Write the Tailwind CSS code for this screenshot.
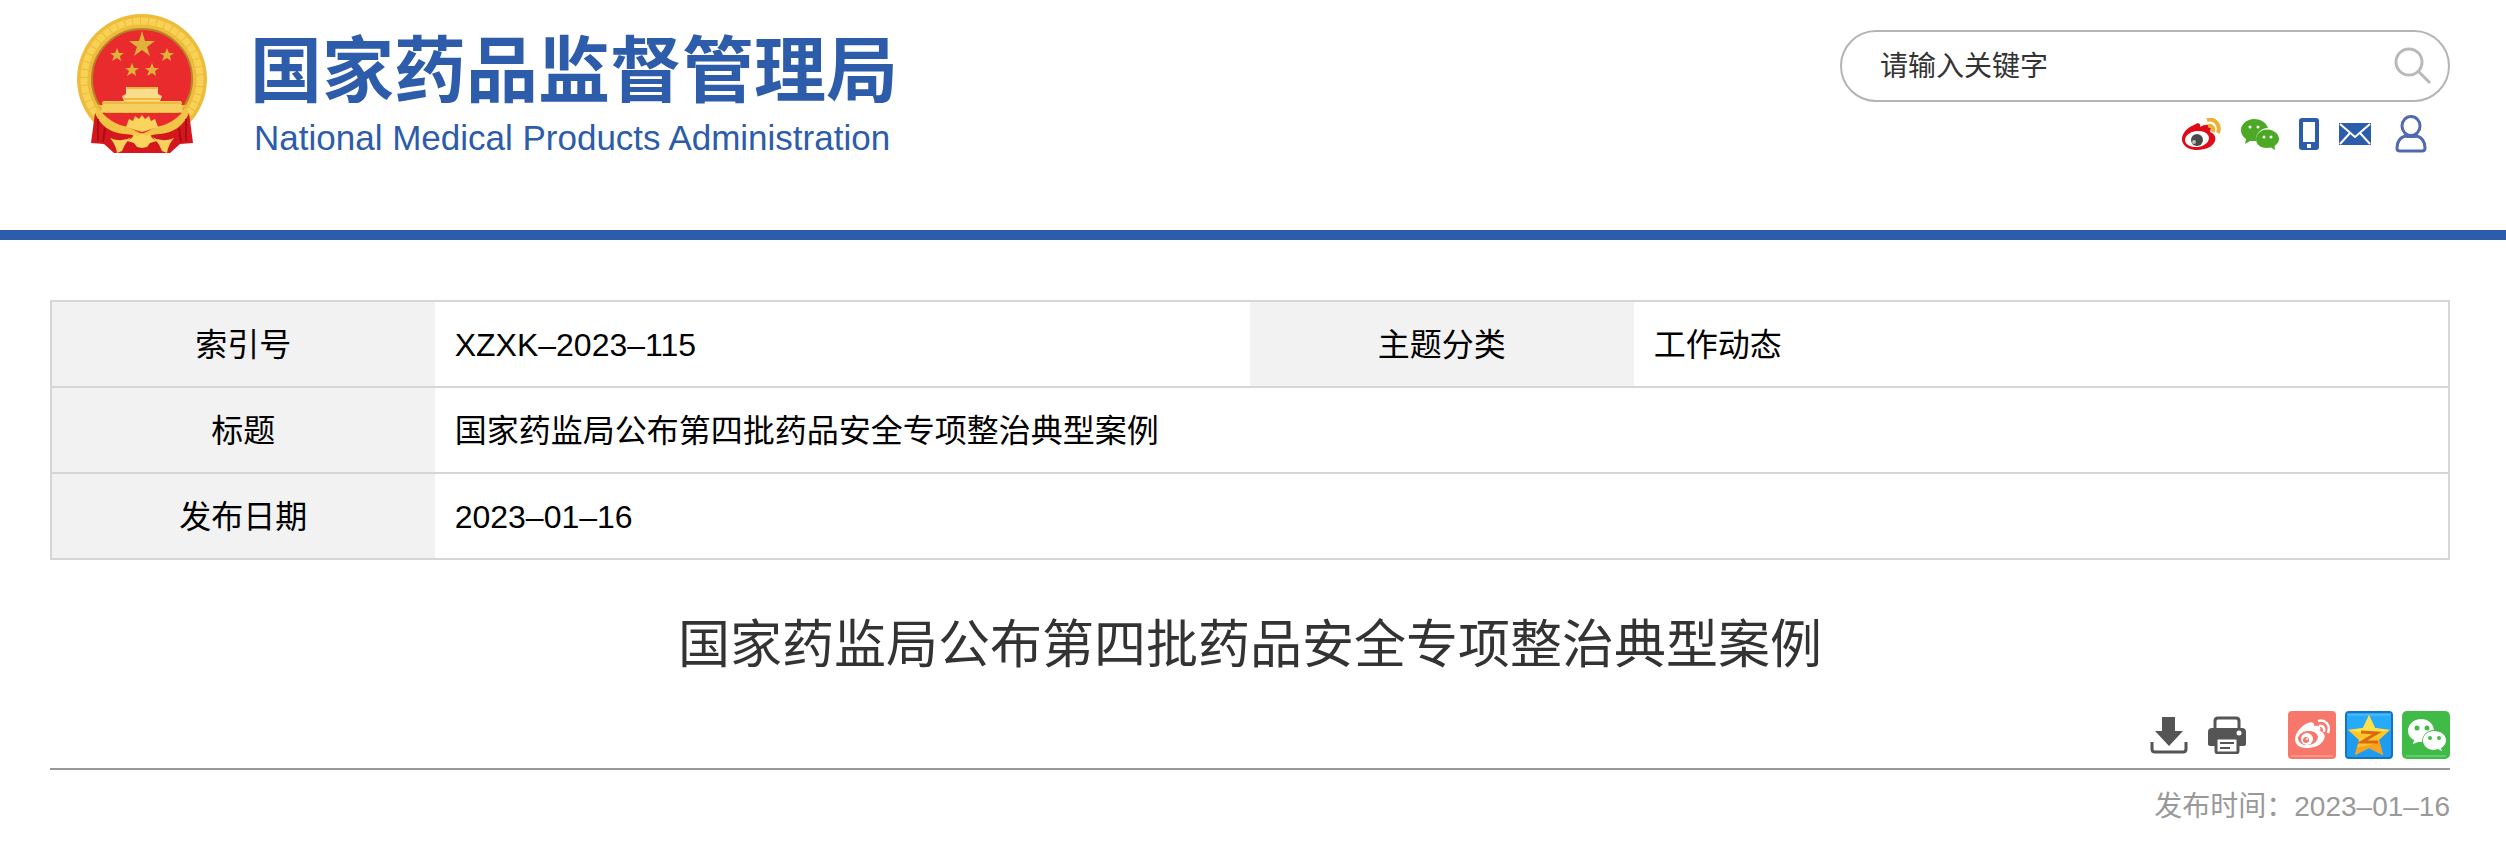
<!DOCTYPE html>
<html lang="zh-CN">
<head>
<meta charset="utf-8">
<title>国家药监局公布第四批药品安全专项整治典型案例</title>
<script src="https://cdn.jsdelivr.net/npm/@tailwindcss/browser@4"></script>
</head>
<body class="bg-white font-['Liberation_Sans','Noto_Sans_CJK_SC',sans-serif] text-black">
<header class="flex items-start justify-between border-b-10 border-[#2c5caa] pr-14 pb-[65px] pl-[76px]">
  <a href="#" class="flex items-start gap-[42px] pt-3 text-[#2c5caa]">
    <svg class="h-[143px] w-[132px]" viewBox="0 0 132 143" aria-hidden="true">
      <circle cx="66" cy="67" r="65" fill="#eebb3a"/>
      <circle cx="66" cy="67" r="58" fill="none" stroke="#f8d256" stroke-width="7" stroke-dasharray="7 1"/>
      <circle cx="66" cy="67" r="50" fill="#e92b2d" stroke="#b5832a" stroke-width="2"/>
      <path d="M19 101 L45 116 H87 L113 101 L117 131 L104 132 L94 141 H38 L28 132 L15 131Z" fill="#d5161d"/>
      <path d="M22 93 H110 L88 118 H44Z" fill="#f0c040"/>
      <path d="M24 101 H108 L98 111 L85 115 L66 122 L47 115 L34 111Z" fill="#e92b2d"/>
      <path d="M22 96 Q34 112 52 115 L66 122 L80 115 Q98 112 110 96 L113 101 Q105 120 84 122 Q72 122 66 129 Q60 122 48 122 Q27 120 19 101Z" fill="#f2c445"/>
      <path d="M50 115 L53 107 L57 109 L59 104 L63 107 L66 103 L69 107 L73 104 L75 109 L79 107 L82 115 L66 120Z" fill="#fad45c"/>
      <path d="M27 89 H50 V86 H82 V89 H105 L107 100 H25Z" fill="#f7cf60"/>
      <path d="M50 75 H82 V82 L86 84 L84 89 H48 L46 84 L50 82Z" fill="#f9dc8c"/>
      <path d="M51 76 H81 M48 87 H84 M26 91 H106" stroke="#eeb83e" stroke-width="2"/>
      <path d="M51 129 L56 126 L58 122 L62 124 L66 121 L70 124 L74 122 L76 126 L81 129 L74 131 L71 135 L66 136 L61 135 L58 131Z" fill="#fad45c"/>
      <path d="M34 126 Q46 131 56 125 Q50 129 46 139 L41 141 Q40 133 34 126Z M98 126 Q86 131 76 125 Q82 129 86 139 L91 141 Q92 133 98 126Z" fill="#f6d15c"/>
      <path d="M22 107 V129 M29 116 L27 130 M110 107 V129 M103 116 L105 130" stroke="#a80f16" stroke-width="2"/>
      <g fill="#dfb23a">
        <path d="M66 19 L69 29 L79 29 L71 35 L74 44 L66 38 L58 44 L61 35 L53 29 L63 29Z"/>
        <path d="M41 36 L43 41 L48 41 L44 44 L45 49 L41 46 L36 49 L38 44 L34 41 L39 41Z"/>
        <path d="M91 36 L93 41 L98 41 L94 44 L95 49 L91 46 L86 49 L88 44 L84 41 L89 41Z"/>
        <path d="M56 51 L58 56 L63 56 L59 59 L60 64 L56 61 L51 64 L53 59 L49 56 L54 56Z"/>
        <path d="M76 51 L78 56 L83 56 L79 59 L80 64 L76 61 L71 64 L73 59 L69 56 L74 56Z"/>
      </g>
    </svg>
    <span class="flex flex-col pt-[19px]">
      <span class="text-[72px] leading-20 font-bold">国家药品监督管理局</span>
      <span class="pl-1 text-[35px] leading-[54px]">National Medical Products Administration</span>
    </span>
  </a>
  <div class="flex w-[610px] flex-col pt-[30px]">
    <form class="flex h-18 items-center rounded-full border-2 border-[#b4b4b4] pr-4 pl-[38px]">
      <input type="text" aria-label="请输入关键字" placeholder="请输入关键字" class="min-w-0 flex-1 pt-0.5 text-[28px] leading-10 outline-none placeholder:text-[#333]">
      <button type="submit" aria-label="搜索" class="shrink-0">
        <svg class="size-[38px]" viewBox="0 0 38 38" fill="none" stroke="#b9b9b9" stroke-width="3"><circle cx="15" cy="15" r="13"/><path d="M24 24 L36 36"/></svg>
      </button>
    </form>
    <nav class="flex items-center justify-end gap-5 pt-[13px] pr-[23px]">
      <a href="#" aria-label="微博"><svg class="h-8 w-10" viewBox="0 0 40 32">
        <path d="M13 7 C17 4 20 5 19 9 C24 6 29 6 30 10 L29 14 C34 16 36 20 33 25 C29 31 21 32 14 32 C6 31 1 27 1 21 C1 15 7 9 13 7Z" fill="#e10b18"/>
        <ellipse cx="16" cy="21" rx="12" ry="8" fill="#fff" transform="rotate(-8 16 21)"/>
        <circle cx="16" cy="22" r="6" fill="#4a4a4a"/><circle cx="13" cy="24" r="2" fill="#bbb"/>
        <path d="M26 2 C34 0 40 7 37 15 M27 8 C31 7 33 10 32 14" fill="none" stroke="#eeb033" stroke-width="4"/></svg></a>
      <a href="#" aria-label="微信"><svg class="h-8 w-[38px]" viewBox="0 0 38 32">
        <path d="M13 1 C6 1 0 6 0 12 C0 16 2 19 5 21 L4 26 L9 23 L13 23 H15 C14 16 20 10 27 10 C25 4 19 1 13 1Z" fill="#4ca925"/>
        <path d="M26 11.500 C20 11.500 15 16 15 21 C15 27 20 30 26 30 L30 29.500 L34 32 L33.500 28 C36 26 38 24 38 21 C38 16 33 11.500 26 11.500Z" fill="#4ca925"/>
        <g fill="#fff"><circle cx="9" cy="9" r="1.500"/><circle cx="17" cy="9" r="1.500"/><circle cx="23" cy="19" r="1.500"/><circle cx="30" cy="19" r="1.500"/></g></svg></a>
      <a href="#" aria-label="手机"><svg class="h-8 w-5" viewBox="0 0 20 32"><rect width="20" height="32" rx="3" fill="#2c5caa"/><path d="M4 4 H16 V24 H4Z M8 26 H12 V30 H8Z" fill="#fff"/></svg></a>
      <a href="#" aria-label="邮箱"><svg class="h-[22px] w-8" viewBox="0 0 32 22"><rect width="32" height="22" fill="#2c5caa"/><path d="M1 1 L16 14 L31 1 M1 21 L11 10 M31 21 L21 10" fill="none" stroke="#fff" stroke-width="2"/></svg></a>
      <a href="#" aria-label="用户" class="pl-1"><svg class="h-[38px] w-8" viewBox="0 0 32 38" fill="none" stroke="#5069b0" stroke-width="3"><ellipse cx="16" cy="11" rx="9" ry="9.500"/><path d="M10 21 C4 23 2 28 2 33 Q2 36 5 36 H27 Q30 36 30 33 C30 28 28 23 22 21"/><path d="M9 21 Q16 22 23 21"/></svg></a>
    </nav>
  </div>
</header>
<main class="pt-15 pr-14 pl-[50px]">
  <table class="w-full table-fixed border-collapse border-2 border-[#d6d6d6] text-[32px] leading-[44px]">
    <colgroup><col class="w-[16%]"><col class="w-[34%]"><col class="w-[16%]"><col class="w-[34%]"></colgroup>
    <tbody>
      <tr class="h-[86px] border-b-2 border-[#d6d6d6]"><th scope="row" class="bg-[#f2f2f2] pt-0.5 font-normal">索引号</th><td class="px-5 pt-0.5">XZXK–2023–115</td><th scope="row" class="bg-[#f2f2f2] pt-0.5 font-normal">主题分类</th><td class="px-5 pt-0.5">工作动态</td></tr>
      <tr class="h-[86px] border-b-2 border-[#d6d6d6]"><th scope="row" class="bg-[#f2f2f2] pt-0.5 font-normal">标题</th><td colspan="3" class="px-5 pt-0.5">国家药监局公布第四批药品安全专项整治典型案例</td></tr>
      <tr class="h-[86px]"><th scope="row" class="bg-[#f2f2f2] pt-0.5 font-normal">发布日期</th><td colspan="3" class="px-5 pt-0.5">2023–01–16</td></tr>
    </tbody>
  </table>
  <h1 class="pt-[49px] text-center text-[52px] leading-[72px] text-[#333]">国家药监局公布第四批药品安全专项整治典型案例</h1>
  <div class="mt-[30px] flex items-center justify-end border-b-2 border-[#999] pb-[9px]">
    <button type="button" aria-label="下载" class="mr-5"><svg class="size-[38px]" viewBox="0 0 38 38"><path d="M12 1 H25 V15 H33 L19 30 L5 15 H12Z" fill="#555"/><path d="M2 26 V33 Q2 36 5 36 H33 Q36 36 36 33 V26" fill="none" stroke="#555" stroke-width="3"/></svg></button>
    <button type="button" aria-label="打印" class="mr-[42px]"><svg class="size-[38px]" viewBox="0 0 38 38"><path d="M7 14 V5 Q7 2 10 2 H28 Q31 2 31 5 V14" fill="none" stroke="#555" stroke-width="3"/><path d="M4 12 H34 Q38 12 38 16 V28 Q38 30 35 30 H3 Q0 30 0 28 V16 Q0 12 4 12Z" fill="#555"/><rect x="8" y="22" width="22" height="15" rx="2" fill="#fff" stroke="#555" stroke-width="3"/><path d="M12 27 H26 M12 32 H22" stroke="#555" stroke-width="2"/><circle cx="31" cy="17" r="2.500" fill="#fff"/></svg></button>
    <div class="flex gap-[9px]">
      <a href="#" aria-label="分享到微博"><svg class="size-12" viewBox="0 0 48 48"><rect width="48" height="48" rx="4" fill="#f7786b"/><path d="M3 45 H45" stroke="#fbb0a8" stroke-width="1"/>
        <path d="M20 12 C24 10 27 12 26 15 C30 14 34 16 32 20 C37 22 38 26 35 30 C31 36 24 37 18 37 C11 37 7 33 7 28 C7 22 14 14 20 12Z" fill="#fff"/><ellipse cx="20" cy="27" rx="10" ry="7" fill="#f7786b" transform="rotate(-8 20 27)"/><circle cx="19" cy="28" r="6" fill="#fff"/><circle cx="18" cy="29" r="3" fill="#f7786b"/><circle cx="19" cy="28" r="1" fill="#fff"/><path d="M30 10 C37 8 43 14 40 22 M31 15 C35 14 37 17 36 21" fill="none" stroke="#fff" stroke-width="2.500"/></svg></a>
      <a href="#" aria-label="分享到QQ空间"><svg class="size-12" viewBox="0 0 48 48"><rect x="1" y="1" width="46" height="46" rx="3" fill="#1e9cf0" stroke="#1673c4" stroke-width="2"/><path d="M2 2 H46 V20 H2Z" fill="#25abf8"/><path d="M3 4 H45" stroke="#6cc4fa" stroke-width="1"/><path d="M24 4 L30 17 L45 19 L34 29 L38 44 L24 37 L10 44 L14 29 L3 19 L18 17Z" fill="#fdc62a"/><path d="M24 4 L30 17 L45 19 L24 23 L3 19 L18 17Z" fill="#ffe14a"/><path d="M34 29 L38 44 L24 37 L10 44 L12 36 Q26 36 34 29Z" fill="#fba21c"/><path d="M16 21 L32 22 L17 31 H33" fill="none" stroke="#d9690f" stroke-width="3"/></svg></a>
      <a href="#" aria-label="分享到微信"><svg class="size-12" viewBox="0 0 48 48"><rect width="48" height="48" rx="5" fill="#41bb48"/><path d="M4 45 H44" stroke="#8ad98e" stroke-width="1"/><path d="M19 8 C12 8 6 13 6 20 C6 24 8 27 12 29 L11 33 L16 31 H20 C20 24 25 19 32 19 C31 12 26 8 19 8Z" fill="#fff"/><path d="M32 20 C26 20 21 24 21 29.500 C21 35 26 39 32 39 L36 38 L40 40 L39 37 C42 35 44 33 44 29.500 C44 24 39 20 32 20Z" fill="#fff"/><g fill="#41bb48"><circle cx="15" cy="17" r="2.500"/><circle cx="25" cy="17" r="2.500"/><circle cx="28" cy="27" r="2"/><circle cx="37" cy="27" r="2"/></g></svg></a>
    </div>
  </div>
  <p class="pt-[17px] text-right text-[28px] leading-10 text-[#999]">发布时间：2023–01–16</p>
</main>
</body>
</html>
